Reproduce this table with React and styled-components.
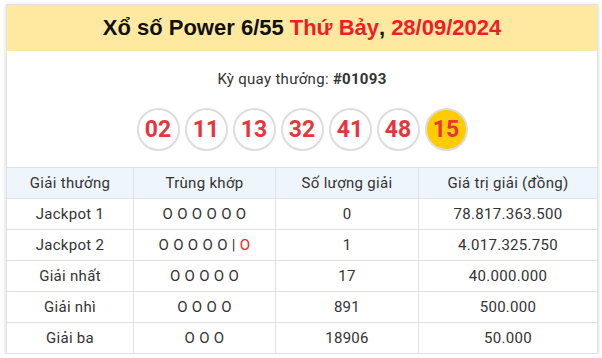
import React from "react";
import styled, { createGlobalStyle } from "styled-components";

const GlobalStyle = createGlobalStyle`
  body {
    margin: 0;
    background: #ffffff;
    font-family: Roboto, "Liberation Sans", sans-serif;
  }
`;

const Page = styled.div`
  padding: 4px 4px 0 6px;
`;

const Card = styled.div`
  width: 590px;
  border: 1px solid #e2e2e2;
  box-shadow: 0 1px 4px rgba(0, 0, 0, 0.18);
  background: #ffffff;
`;

const Header = styled.div`
  height: 46px;
  background: #ffe9a0;
  display: flex;
  align-items: center;
  justify-content: center;
  font-family: "Liberation Sans", Arial, sans-serif;
  font-weight: bold;
  font-size: 22px;
  color: #111111;
`;

const Red = styled.span`
  color: #ee1d27;
  margin: ${(p) => (p.gap ? "0 0 0 6px" : "0")};
`;

const Draw = styled.div`
  padding-top: 18px;
  text-align: center;
  font-size: 15px;
  letter-spacing: 0.3px;
  line-height: 20px;
  color: #333333;

  b {
    font-weight: 700;
  }
`;

const Balls = styled.div`
  display: flex;
  justify-content: center;
  gap: 5px;
  padding: 19px 0 16px;
`;

const Ball = styled.div`
  width: 39px;
  height: 39px;
  border-radius: 50%;
  border: 2px solid #dddddd;
  background: ${(p) => (p.power ? "#ffcc00" : "#ffffff")};
  display: flex;
  align-items: center;
  justify-content: center;
  font-size: 23px;
  font-weight: 700;
  color: #e8343b;
`;

const Table = styled.table`
  width: 100%;
  border-collapse: collapse;
  font-size: 15px;
  letter-spacing: 0.3px;
  color: #333333;
`;

const Th = styled.th`
  height: 30px;
  padding: 0;
  font-weight: 400;
  background: #eef5fd;
  border-top: 1px solid #dfe3e8;
  border-left: 1px solid #dfe3e8;
  width: ${(p) => p.w}px;

  &:first-child {
    border-left: none;
  }
`;

const Td = styled.td`
  height: 30px;
  padding: 0;
  text-align: center;
  border-top: 1px solid #dfe3e8;
  border-left: 1px solid #dfe3e8;

  &:first-child {
    border-left: none;
  }
`;

const Miss = styled.span`
  color: #ee1d27;
`;

const numbers = ["02", "11", "13", "32", "41", "48"];

const rows = [
  ["Jackpot 1", "O O O O O O", "0", "78.817.363.500"],
  ["Jackpot 2", null, "1", "4.017.325.750"],
  ["Giải nhất", "O O O O O", "17", "40.000.000"],
  ["Giải nhì", "O O O O", "891", "500.000"],
  ["Giải ba", "O O O", "18906", "50.000"],
];

export default function App() {
  return (
    <>
      <GlobalStyle />
      <Page>
        <Card>
          <Header>
            Xổ số Power 6/55<Red gap="1">Thứ Bảy</Red>,<Red gap="1">28/09/2024</Red>
          </Header>
          <Draw>
            Kỳ quay thưởng: <b>#01093</b>
          </Draw>
          <Balls>
            {numbers.map((n) => (
              <Ball key={n}>{n}</Ball>
            ))}
            <Ball power>15</Ball>
          </Balls>
          <Table>
            <thead>
              <tr>
                <Th w={126}>Giải thưởng</Th>
                <Th w={141}>Trùng khớp</Th>
                <Th w={142}>Số lượng giải</Th>
                <Th>Giá trị giải (đồng)</Th>
              </tr>
            </thead>
            <tbody>
              {rows.map((r) => (
                <tr key={r[0]}>
                  <Td>{r[0]}</Td>
                  <Td>
                    {r[1] ?? (
                      <>
                        O O O O O | <Miss>O</Miss>
                      </>
                    )}
                  </Td>
                  <Td>{r[2]}</Td>
                  <Td>{r[3]}</Td>
                </tr>
              ))}
            </tbody>
          </Table>
        </Card>
      </Page>
    </>
  );
}
